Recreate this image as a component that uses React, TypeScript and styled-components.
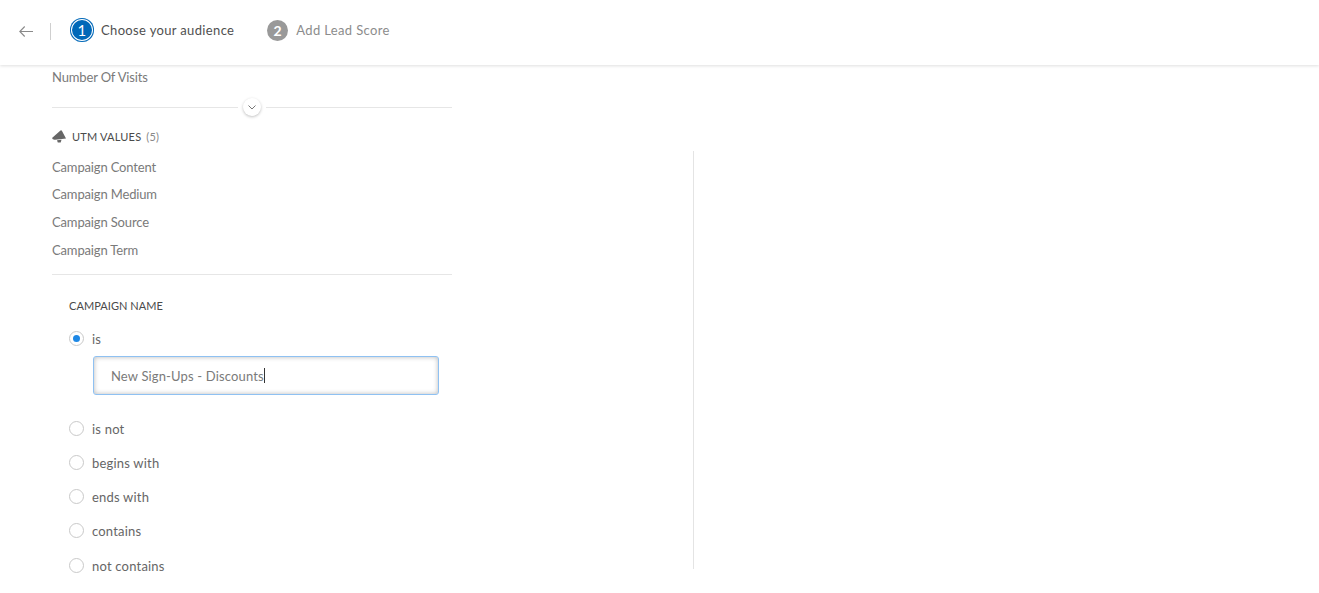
import styled, { createGlobalStyle } from "styled-components";

const GlobalStyle = createGlobalStyle`
  html, body {
    margin: 0;
    padding: 0;
    background: #ffffff;
    overflow: hidden;
  }
  body {
    font-family: Lato, "Liberation Sans", sans-serif;
    font-size: 13px;
    color: #6b6b6b;
  }
`;

const Page = styled.div`
  width: 1319px;
  height: 593px;
  display: flex;
  flex-direction: column;
`;
const Header = styled.header`
  height: 65px;
  flex: none;
  display: flex;
  align-items: center;
  padding: 0 0 5px 19px;
  box-sizing: border-box;
  box-shadow: 0 1px 3px rgba(0, 0, 0, 0.13);
`;
const BackButton = styled.div`
  width: 14px;
  height: 11px;
  margin-top: 2px;
  display: flex;
  color: #8a8a8a;
`;
const HeaderDivider = styled.div`
  width: 1px;
  height: 17px;
  margin: 2px 19px 0 17px;
  background: #cfcfcf;
`;
const Step = styled.div<{ $active?: boolean }>`
  display: flex;
  align-items: center;
  gap: ${(p) => (p.$active ? 7 : 8)}px;
  margin-right: 33px;
  letter-spacing: 0.35px;
  color: ${(p) => (p.$active ? "#505050" : "#8c8c8c")};
`;
const StepNumber = styled.div<{ $active?: boolean }>`
  width: ${(p) => (p.$active ? 24 : 21)}px;
  height: ${(p) => (p.$active ? 24 : 21)}px;
  border-radius: 50%;
  display: flex;
  align-items: center;
  justify-content: center;
  font-size: ${(p) => (p.$active ? 15 : 14)}px;
  font-weight: ${(p) => (p.$active ? 400 : 700)};
  color: #ffffff;
  background: ${(p) => (p.$active ? "#0068b8" : "#999999")};
  box-shadow: ${(p) =>
    p.$active ? "inset 0 0 0 1px #0068b8, inset 0 0 0 2px #ffffff" : "none"};
`;
const Main = styled.main`
  flex: 1;
  display: flex;
`;
const LeftPanel = styled.div`
  width: 693px;
  flex: none;
  padding-left: 52px;
  box-sizing: border-box;
`;
const FieldList = styled.div`
  width: 400px;
`;
const FieldItem = styled.div`
  height: 27.7px;
  line-height: 24px;
  font-size: 13px;
  letter-spacing: -0.15px;
  color: #7a7a7a;
`;
const ExpandRow = styled.div`
  height: 29px;
  display: flex;
  align-items: center;
  gap: 5px;
`;
const Rule = styled.div`
  flex: 1;
  height: 1px;
  background: #e6e6e6;
`;
const ExpandButton = styled.div`
  width: 18px;
  height: 18px;
  border-radius: 50%;
  display: flex;
  align-items: center;
  justify-content: center;
  color: #777777;
  background: #ffffff;
  box-shadow: 0 1px 3px rgba(0, 0, 0, 0.25);
`;
const GroupTitle = styled.div`
  height: 30px;
  margin-bottom: 3px;
  display: flex;
  align-items: center;
  gap: 6px;
  font-size: 11px;
  letter-spacing: 0.2px;
  color: #4a4a4a;
`;
const GroupCount = styled.span`
  margin-left: 2px;
  color: #888888;
`;
const SectionRule = styled.div`
  height: 1px;
  margin-top: 9px;
  background: #e6e6e6;
`;
const Filter = styled.div`
  padding: 23px 0 0 17px;
`;
const FilterTitle = styled.div`
  height: 16px;
  line-height: 16px;
  margin-bottom: 8px;
  font-size: 11px;
  letter-spacing: 0.05px;
  color: #4a4a4a;
`;
const RadioRow = styled.div`
  height: 34px;
  display: flex;
  align-items: center;
  gap: 8px;
  font-size: 13px;
  color: #666666;
  letter-spacing: 0.2px;
  &:last-child {
    margin-top: 1px;
  }
`;
const RadioCircle = styled.div<{ $checked?: boolean }>`
  width: 15px;
  height: 15px;
  flex: none;
  box-sizing: border-box;
  margin-top: -2px;
  border-radius: 50%;
  border: 1px solid #c9c9c9;
  background: #ffffff;
  display: flex;
  align-items: center;
  justify-content: center;
  &::after {
    content: "";
    width: 7px;
    height: 7px;
    border-radius: 50%;
    background: ${(p) => (p.$checked ? "#1e88e5" : "transparent")};
  }
`;
const ValueInput = styled.div`
  width: 346px;
  height: 39px;
  box-sizing: border-box;
  margin: 0 0 17px 24px;
  padding-left: 17px;
  display: flex;
  align-items: center;
  border: 1px solid #8fc1f2;
  border-radius: 3px;
  box-shadow: inset 0 0 5px rgba(0, 0, 0, 0.28);
  font-size: 13px;
  letter-spacing: 0.15px;
  color: #7a7a7a;
`;
const Caret = styled.span`
  width: 1px;
  height: 15px;
  background: #333333;
`;
const RightPanel = styled.div`
  width: 1px;
  height: 418px;
  margin-top: 86px;
  background: #e4e4e4;
`;

const fields = ["Campaign Content", "Campaign Medium", "Campaign Source", "Campaign Term"];
const options = ["is not", "begins with", "ends with", "contains", "not contains"];

const App = () => {
  return (
    <Page>
      <GlobalStyle />
      <Header>
        <BackButton>
          <svg width="14" height="11" viewBox="0 0 14 11" fill="none" stroke="currentColor" strokeWidth="1.1">
            <path d="M14 5.500H1M5.700 0.500L0.800 5.500l4.900 5" />
          </svg>
        </BackButton>
        <HeaderDivider />
        <Step $active>
          <StepNumber $active>1</StepNumber>
          Choose your audience
        </Step>
        <Step>
          <StepNumber>2</StepNumber>
          Add Lead Score
        </Step>
      </Header>
      <Main>
        <LeftPanel>
          <FieldList>
            <FieldItem>Number Of Visits</FieldItem>
            <ExpandRow>
              <Rule />
              <ExpandButton>
                <svg width="8" height="5" viewBox="0 0 8 5" fill="none" stroke="currentColor" strokeWidth="1">
                  <path d="M0.500 0.500L4 4l3.500-3.500" />
                </svg>
              </ExpandButton>
              <Rule />
            </ExpandRow>
            <GroupTitle>
              <svg width="14" height="13" viewBox="0 0 14 13" fill="#666666">
                <path d="M0 8L8.500 0.500Q9.500 0 10 1L14 8.500L10 9L3 9.800Q0.500 10 0 8Z" />
                <path d="M5 10.300l4.500-.6-.8 2.800h-2.900z" />
              </svg>
              <span>
                UTM VALUES <GroupCount>(5)</GroupCount>
              </span>
            </GroupTitle>
            {fields.map((field) => (
              <FieldItem key={field}>{field}</FieldItem>
            ))}
            <SectionRule />
            <Filter>
              <FilterTitle>CAMPAIGN NAME</FilterTitle>
              <RadioRow>
                <RadioCircle $checked />
                is
              </RadioRow>
              <ValueInput>
                New Sign-Ups - Discounts
                <Caret />
              </ValueInput>
              {options.map((option) => (
                <RadioRow key={option}>
                  <RadioCircle />
                  {option}
                </RadioRow>
              ))}
            </Filter>
          </FieldList>
        </LeftPanel>
        <RightPanel />
      </Main>
    </Page>
  );
};

export default App;
